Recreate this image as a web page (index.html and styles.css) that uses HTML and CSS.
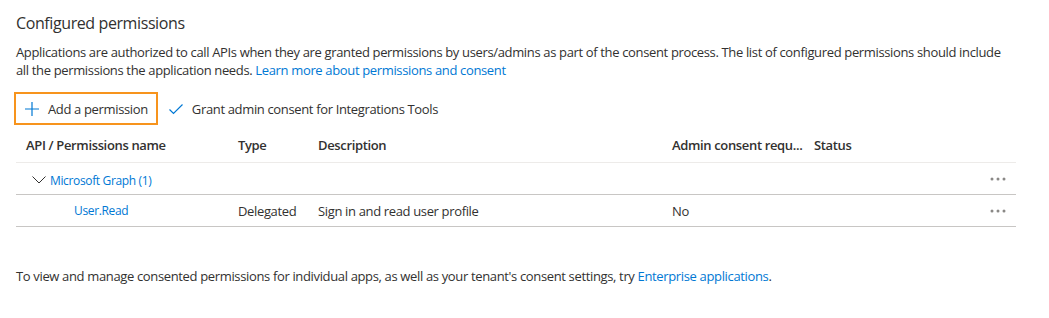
FILE: index.html
```html
<!DOCTYPE html>
<html lang="en">
<head>
    <meta charset="UTF-8">
    <title>Configured permissions</title>
    <link rel="stylesheet" href="styles.css">
</head>
<body>
    <div class="page">
        <h2 class="title">Configured permissions</h2>
        <p class="intro">Applications are authorized to call APIs when they are granted permissions by users/admins as part of the consent process. The list of configured permissions should include all the permissions the application needs. <a href="#">Learn more about permissions and consent</a></p>

        <div class="toolbar">
            <button class="cmd focused">
                <svg width="16" height="16" viewBox="0 0 16 16"><path d="M8 1v14M1 8h14" stroke="#0078d4" stroke-width="1.2" fill="none"/></svg>
                Add a permission
            </button>
            <button class="cmd">
                <svg width="16" height="16" viewBox="0 0 16 16"><path d="M1.5 8.5l4 4 9-9" stroke="#0078d4" stroke-width="1.2" fill="none"/></svg>
                Grant admin consent for Integrations Tools
            </button>
        </div>

        <div class="grid">
            <div class="row head">
                <div class="c-name">API / Permissions name</div>
                <div class="c-type">Type</div>
                <div class="c-desc">Description</div>
                <div class="c-admin">Admin consent requ...</div>
                <div class="c-status">Status</div>
                <div class="c-more"></div>
            </div>
            <div class="row group">
                <div class="c-name">
                    <svg width="14" height="8" viewBox="0 0 14 8"><path d="M0.5 0.5l6.5 6.5 6.5-6.5" stroke="#323130" stroke-width="1" fill="none"/></svg>
                    <a href="#">Microsoft Graph (1)</a>
                </div>
                <div class="c-type"></div>
                <div class="c-desc"></div>
                <div class="c-admin"></div>
                <div class="c-status"></div>
                <div class="c-more"><svg class="dots" width="16" height="4" viewBox="0 0 16 4"><circle cx="2" cy="2" r="1.5"/><circle cx="8" cy="2" r="1.5"/><circle cx="14" cy="2" r="1.5"/></svg></div>
            </div>
            <div class="row item">
                <div class="c-name"><a href="#">User.Read</a></div>
                <div class="c-type">Delegated</div>
                <div class="c-desc">Sign in and read user profile</div>
                <div class="c-admin">No</div>
                <div class="c-status"></div>
                <div class="c-more"><svg class="dots" width="16" height="4" viewBox="0 0 16 4"><circle cx="2" cy="2" r="1.5"/><circle cx="8" cy="2" r="1.5"/><circle cx="14" cy="2" r="1.5"/></svg></div>
            </div>
        </div>

        <p class="footer">To view and manage consented permissions for individual apps, as well as your tenant's consent settings, try <a href="#">Enterprise applications</a>.</p>
    </div>
</body>
</html>
```

FILE: styles.css
```css
body {
    margin: 0;
    background: #fff;
    font-family: "Open Sans", "Noto Sans", sans-serif;
    letter-spacing: -0.35px;
    color: #323130;
}
a {
    color: #0078d4;
    text-decoration: none;
}
.page {
    padding: 11px 33px 0 16px;
}
.title {
    margin: 0;
    font-size: 16px;
    font-weight: 400;
    line-height: 24px;
    letter-spacing: -0.4px;
}
.intro {
    margin: 8px 0 0;
    font-size: 13px;
    line-height: 18px;
}
.toolbar {
    display: flex;
    align-items: center;
    margin: 13px 0 0 -2px;
}
.cmd {
    display: flex;
    align-items: center;
    gap: 8px;
    height: 33px;
    padding: 0 8px;
    border: 2px solid transparent;
    background: none;
    font: inherit;
    font-size: 13px;
    letter-spacing: inherit;
    color: #323130;
}
.cmd.focused {
    border-color: #f7941d;
}
.grid {
    margin-top: 3px;
}
.row {
    display: grid;
    grid-template-columns: 212px 80px 354px 142px 1fr 40px;
    align-items: center;
    font-size: 13px;
    border-bottom: 1px solid #c8c6c4;
}
.row > div {
    padding-left: 10px;
    white-space: nowrap;
    overflow: hidden;
}
.row.head {
    height: 34px;
    font-weight: 600;
    border-bottom-color: #edebe9;
}
.row.group {
    height: 32px;
    padding-top: 3px;
    box-sizing: border-box;
    font-size: 12px;
}
.row.item {
    height: 31px;
}
.group .c-name {
    display: flex;
    align-items: center;
    gap: 4px;
    padding-left: 16px;
}
.group .c-more {
    margin-top: -3px;
}
.item .c-name {
    padding-left: 58px;
    font-size: 12px;
}
.c-more {
    display: flex;
    justify-content: flex-end;
    padding-right: 10px;
}
.dots {
    fill: #8a8886;
}
.footer {
    margin: 40px 0 0;
    font-size: 13px;
    line-height: 18px;
}
```
